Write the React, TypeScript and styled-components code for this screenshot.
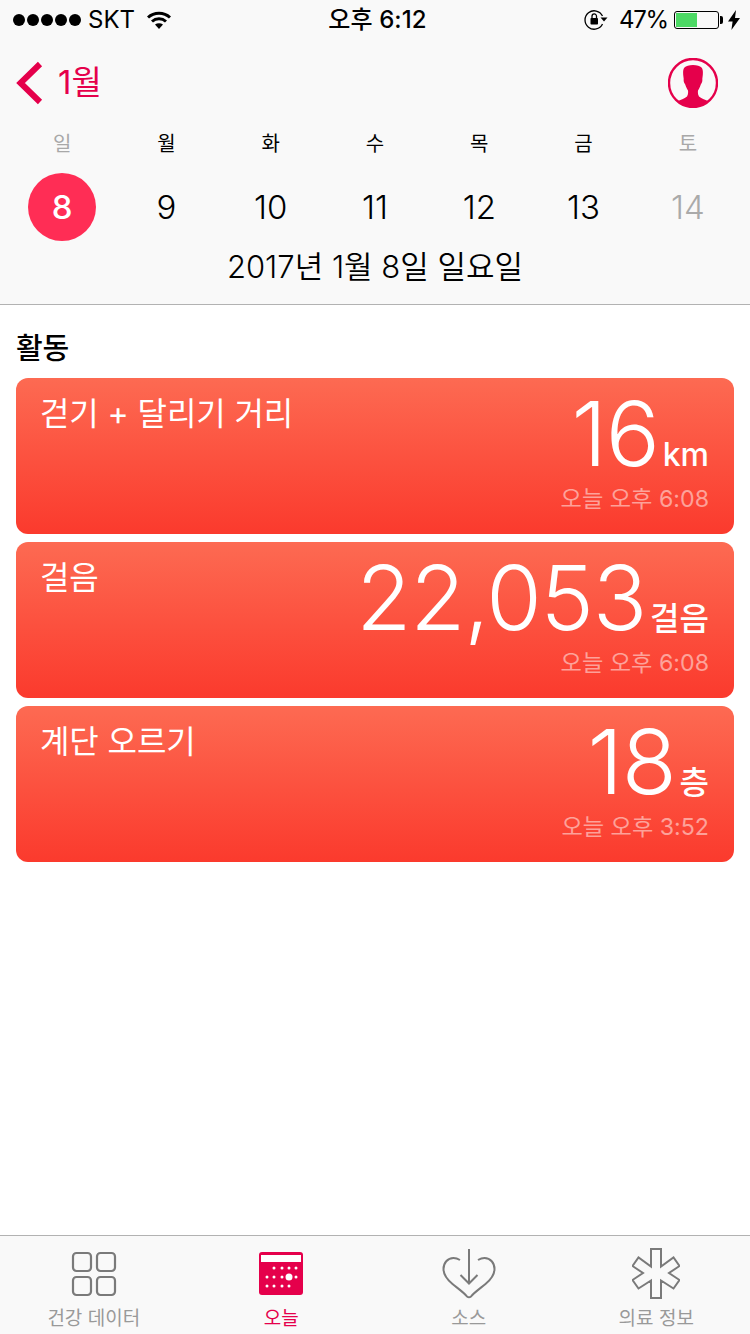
import React from "react";
import styled, { createGlobalStyle } from "styled-components";

const FONT = `Inter, "Noto Sans CJK KR", sans-serif`;
const PINK = "#e5004b";

const GlobalStyle = createGlobalStyle`
  html, body {
    margin: 0;
    padding: 0;
    background: #fff;
  }
  * {
    box-sizing: border-box;
  }
`;

const Page = styled.div`
  width: 750px;
  height: 1334px;
  display: flex;
  flex-direction: column;
  overflow: hidden;
  font-family: ${FONT};
  color: #000;
`;

const Header = styled.header`
  height: 305px;
  background: #f9f9f9;
  border-bottom: 1px solid #b2b2b2;
  flex: none;
`;

const StatusBar = styled.div`
  height: 40px;
  padding: 0 10px 0 13px;
  display: grid;
  grid-template-columns: 1fr auto 1fr;
  align-items: center;
  font-size: 24px;
  line-height: 40px;
`;

const StatusLeft = styled.div`
  display: flex;
  align-items: center;
`;

const StatusRight = styled.div`
  display: flex;
  align-items: center;
  justify-content: flex-end;
`;

const Dots = styled.div`
  display: flex;
  gap: 2px;
  margin-right: 7px;
`;

const Dot = styled.span`
  width: 12px;
  height: 12px;
  border-radius: 50%;
  background: #000;
`;

const Carrier = styled.span`
  margin-right: 12px;
`;

const Clock = styled.div`
  font-weight: 500;
  padding-left: 2px;
  letter-spacing: 0.1px;
`;

const Percent = styled.span`
  margin: 0 6px 0 11px;
  letter-spacing: -1.2px;
`;

const Battery = styled.div`
  width: 45px;
  height: 18px;
  border: 1px solid #000;
  border-radius: 3px;
  padding: 1px;
  position: relative;
  margin-right: 9px;
  &::after {
    content: "";
    position: absolute;
    right: -5px;
    top: 4px;
    width: 3px;
    height: 8px;
    background: #000;
    border-radius: 0 2px 2px 0;
  }
`;

const BatteryFill = styled.div`
  height: 100%;
  background: #4cd964;
`;

const NavRow = styled.div`
  height: 86px;
  padding: 0 32px 0 16px;
  display: flex;
  align-items: center;
  justify-content: space-between;
`;

const BackLink = styled.div`
  display: flex;
  align-items: center;
  gap: 14px;
  color: ${PINK};
  font-size: 33px;
  line-height: 42px;
`;

const BackText = styled.span`
  margin-bottom: 2px;
`;

const WeekGrid = styled.div`
  display: grid;
  grid-template-columns: repeat(7, 1fr);
  padding: 0 10px;
  justify-items: center;
`;

const DayName = styled.div<{ $muted?: boolean }>`
  height: 36px;
  font-size: 20px;
  line-height: 36px;
  color: ${(p) => (p.$muted ? "#a8a8a8" : "#000")};
`;

const DayNumber = styled.div<{ $selected?: boolean; $muted?: boolean }>`
  width: 68px;
  height: 68px;
  margin-top: 11px;
  border-radius: 50%;
  display: flex;
  align-items: center;
  justify-content: center;
  font-size: 33px;
  font-weight: ${(p) => (p.$selected ? 500 : 350)};
  background: ${(p) => (p.$selected ? "#ff2d55" : "transparent")};
  color: ${(p) => (p.$selected ? "#fff" : p.$muted ? "#aaaaaa" : "#000")};
`;

const FullDate = styled.div`
  margin-top: 4px;
  text-align: center;
  font-size: 31px;
  line-height: 44px;
  font-weight: 350;
`;

const Main = styled.main`
  flex: 1;
  background: #fff;
  padding: 0 16px;
`;

const SectionTitle = styled.h2`
  margin: 0;
  height: 73px;
  padding: 23px 0 0;
  font-size: 29px;
  line-height: 42px;
  font-weight: 500;
  letter-spacing: -0.3px;
`;

const CardList = styled.div`
  display: flex;
  flex-direction: column;
  gap: 8px;
`;

const Card = styled.section`
  height: 156px;
  border-radius: 12px;
  padding: 16px 25px 0 24px;
  background: linear-gradient(180deg, #fd6a52 0%, #fb3a2d 100%);
  color: #fff;
  display: flex;
  justify-content: space-between;
`;

const CardTitle = styled.div`
  font-size: 32px;
  line-height: 40px;
  letter-spacing: -0.1px;
`;

const CardValues = styled.div`
  display: flex;
  flex-direction: column;
  align-items: flex-end;
  padding-top: 2px;
`;

const ValueRow = styled.div`
  display: flex;
  align-items: baseline;
  gap: 4px;
  height: 76px;
`;

const BigNumber = styled.span`
  font-size: 90px;
  line-height: 76px;
  font-weight: 270;
  letter-spacing: -1.2px;
`;

const Unit = styled.span`
  font-size: 32px;
  line-height: 32px;
  font-weight: 500;
`;

const Timestamp = styled.div`
  margin-top: 11px;
  font-size: 23.2px;
  line-height: 32px;
  color: rgba(255, 255, 255, 0.5);
`;

const TabBar = styled.nav`
  height: 99px;
  flex: none;
  background: #f9f9f9;
  border-top: 1px solid #b2b2b2;
  display: grid;
  grid-template-columns: repeat(4, 1fr);
`;

const Tab = styled.div<{ $active?: boolean }>`
  display: flex;
  flex-direction: column;
  align-items: center;
  padding-top: 3px;
  color: ${(p) => (p.$active ? PINK : "#999999")};
`;

const TabIcon = styled.div`
  height: 70px;
  display: flex;
  align-items: center;
  justify-content: center;
`;

const TabLabel = styled.div`
  font-size: 19px;
  line-height: 20px;
`;

const Wifi = () => (
  <svg width="24" height="18" viewBox="0 0 24 18">
    <path d="M1 6.5C7 .8 17 .8 23 6.500" fill="none" stroke="#000" strokeWidth="3" />
    <path d="M5 10.500c4-3.600 10-3.600 14 0" fill="none" stroke="#000" strokeWidth="3" />
    <path d="M8 13.600c2.400-1.800 5.600-1.800 8 0L12 18z" fill="#000" />
  </svg>
);

const RotationLock = () => (
  <svg width="24" height="20" viewBox="0 0 24 20">
    <path d="M18.500 6A9.200 9.200 0 1 0 18.500 14" fill="none" stroke="#000" strokeWidth="1.300" />
    <path d="M16.500 7.500h7L20 11.500z" fill="#000" />
    <rect x="6.500" y="8" width="7.500" height="6.500" rx="0.800" fill="#000" />
    <path d="M8 8V6.200a2.250 2.250 0 0 1 4.500 0V8" fill="none" stroke="#000" strokeWidth="1.300" />
  </svg>
);

const Bolt = () => (
  <svg width="12" height="20" viewBox="0 0 12 20">
    <path d="M8 0 0 11.500h4.600L3.400 20 12 8H7z" fill="#000" />
  </svg>
);

const Chevron = () => (
  <svg width="28" height="44" viewBox="0 0 28 44">
    <path d="M24 3 4.500 22 24 41" fill="none" stroke={PINK} strokeWidth="6" />
  </svg>
);

const Avatar = () => (
  <svg width="50" height="50" viewBox="0 0 50 50">
    <defs>
      <clipPath id="avatar-clip">
        <circle cx="25" cy="25" r="24" />
      </clipPath>
    </defs>
    <g clipPath="url(#avatar-clip)">
      <path
        d="M25 7C29 7 32 8 33.500 9.500 35 11 35 14 34.800 17L34.300 21C34.600 23 34 25 33 26 32 29 31 31 30 32.500 29.700 35 30 37 31 38.500 33 40.500 37 41.500 40 43 42 44 43.500 45.500 44 47V52H6V47C6.500 45.500 8 44 10 43 13 41.500 17 40.500 19 38.500 20 37 20.300 35 20 32.500 19 31 18 29 17 26 16 25 15.400 23 15.700 21L15.200 17C15 14 15 11 16.500 9.500 18 8 21 7 25 7z"
        fill={PINK}
      />
    </g>
    <circle cx="25" cy="25" r="24" fill="none" stroke={PINK} strokeWidth="2.400" />
  </svg>
);

const GridIcon = () => (
  <svg width="46" height="46" viewBox="0 0 46 46" fill="none" stroke="#7a7a7a" strokeWidth="2.200">
    <rect x="2" y="2" width="18" height="18" rx="3.500" />
    <rect x="26" y="2" width="18" height="18" rx="3.500" />
    <rect x="2" y="26" width="18" height="18" rx="3.500" />
    <rect x="26" y="26" width="18" height="18" rx="3.500" />
  </svg>
);

const calendarDots = [
  [15, 16], [23, 16], [30, 16], [37, 16],
  [8, 25], [15, 25], [23, 25], [37, 25],
  [8, 34], [15, 34], [23, 34], [30, 34],
];

const CalendarIcon = () => (
  <svg width="44" height="44" viewBox="0 0 44 44">
    <rect width="44" height="43" rx="3" fill={PINK} />
    <rect x="2" y="3" width="40" height="7" fill="#fff" />
    {calendarDots.map(([x, y]) => (
      <circle key={`${x}-${y}`} cx={x} cy={y} r="1.500" fill="#fff" />
    ))}
    <circle cx="30" cy="25" r="3.500" fill="#fff" />
  </svg>
);

const HeartIcon = () => (
  <svg width="54" height="52" viewBox="0 0 54 52" fill="none" stroke="#7a7a7a" strokeWidth="2">
    <path d="M18 12C15.500 10.500 13.500 10 11.500 10 5.500 10 1.500 15 1.500 21c0 6 3 10 9 15 5.500 4.500 12 9 14.500 12.500q2 1.500 4 0C31.500 45 38 40.500 43.500 36c6-5 9-9 9-15 0-6-4-11-10-11-2 0-4 .500-6.500 2" />
    <path d="M27 1v34.500M18.500 27l8.500 8.500 8.500-8.500" />
  </svg>
);

const StarOfLifeIcon = () => (
  <svg width="48" height="52" viewBox="0 0 48 52" fill="none" stroke="#7a7a7a" strokeWidth="2">
    <path d="M19 1h10v17.500L41.500 9.500 47.500 18 37 25l10.500 7-6 8.500L29 32.500V50H19V32.500L6.500 40.500.5 32 11 25 .5 18 6.500 9.500 19 18.500z" />
  </svg>
);

const days = [
  { name: "일", num: 8, selected: true, muted: true },
  { name: "월", num: 9 },
  { name: "화", num: 10 },
  { name: "수", num: 11 },
  { name: "목", num: 12 },
  { name: "금", num: 13 },
  { name: "토", num: 14, muted: true },
];

const stats = [
  { title: "걷기 + 달리기 거리", value: "16", unit: "km", time: "오늘 오후 6:08" },
  { title: "걸음", value: "22,053", unit: "걸음", time: "오늘 오후 6:08" },
  { title: "계단 오르기", value: "18", unit: "층", time: "오늘 오후 3:52" },
];

const App = () => {
  return (
    <Page>
      <GlobalStyle />
      <Header>
        <StatusBar>
          <StatusLeft>
            <Dots>
              {[0, 1, 2, 3, 4].map((i) => (
                <Dot key={i} />
              ))}
            </Dots>
            <Carrier>SKT</Carrier>
            <Wifi />
          </StatusLeft>
          <Clock>오후 6:12</Clock>
          <StatusRight>
            <RotationLock />
            <Percent>47%</Percent>
            <Battery>
              <BatteryFill style={{ width: "50%" }} />
            </Battery>
            <Bolt />
          </StatusRight>
        </StatusBar>
        <NavRow>
          <BackLink>
            <Chevron />
            <BackText>1월</BackText>
          </BackLink>
          <Avatar />
        </NavRow>
        <WeekGrid>
          {days.map((d) => (
            <DayName key={d.name} $muted={d.muted}>
              {d.name}
            </DayName>
          ))}
          {days.map((d) => (
            <DayNumber key={d.num} $selected={d.selected} $muted={d.muted}>
              {d.num}
            </DayNumber>
          ))}
        </WeekGrid>
        <FullDate>2017년 1월 8일 일요일</FullDate>
      </Header>
      <Main>
        <SectionTitle>활동</SectionTitle>
        <CardList>
          {stats.map((s) => (
            <Card key={s.title}>
              <CardTitle>{s.title}</CardTitle>
              <CardValues>
                <ValueRow>
                  <BigNumber>{s.value}</BigNumber>
                  <Unit>{s.unit}</Unit>
                </ValueRow>
                <Timestamp>{s.time}</Timestamp>
              </CardValues>
            </Card>
          ))}
        </CardList>
      </Main>
      <TabBar>
        <Tab>
          <TabIcon>
            <GridIcon />
          </TabIcon>
          <TabLabel>건강 데이터</TabLabel>
        </Tab>
        <Tab $active>
          <TabIcon>
            <CalendarIcon />
          </TabIcon>
          <TabLabel>오늘</TabLabel>
        </Tab>
        <Tab>
          <TabIcon>
            <HeartIcon />
          </TabIcon>
          <TabLabel>소스</TabLabel>
        </Tab>
        <Tab>
          <TabIcon>
            <StarOfLifeIcon />
          </TabIcon>
          <TabLabel>의료 정보</TabLabel>
        </Tab>
      </TabBar>
    </Page>
  );
};

export default App;
